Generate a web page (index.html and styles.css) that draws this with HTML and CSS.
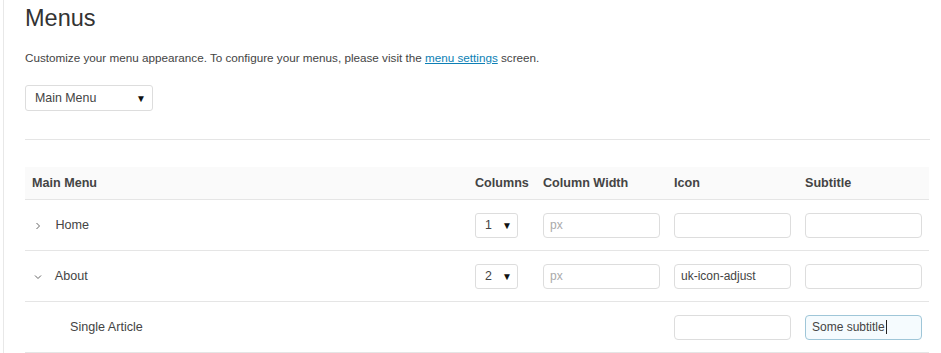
FILE: index.html
```html
<!DOCTYPE html>
<html lang="en">
<head>
    <meta charset="UTF-8">
    <title>Menus</title>
    <link rel="stylesheet" href="styles.css">
</head>
<body>
    <div class="page">
        <div class="sidebar"></div>
        <main class="content">
            <h1>Menus</h1>
            <p class="intro">Customize your menu appearance. To configure your menus, please visit the <a href="#">menu settings</a> screen.</p>

            <div class="select select-menu">
                <span>Main Menu</span>
                <span class="arrow">&#9660;</span>
            </div>

            <hr>

            <table class="menu-table">
                <thead>
                    <tr>
                        <th class="col-name">Main Menu</th>
                        <th class="col-columns">Columns</th>
                        <th class="col-width">Column Width</th>
                        <th class="col-icon">Icon</th>
                        <th class="col-subtitle">Subtitle</th>
                    </tr>
                </thead>
                <tbody>
                    <tr>
                        <td class="item">
                            <svg class="toggle" width="8" height="8" viewBox="0 0 8 8"><polyline points="2.5,1 5.5,4 2.5,7" fill="none" stroke="#666" stroke-width="1"/></svg>
                            Home
                        </td>
                        <td>
                            <div class="select select-small">
                                <span>1</span>
                                <span class="arrow">&#9660;</span>
                            </div>
                        </td>
                        <td><input type="text" class="field" placeholder="px"></td>
                        <td><input type="text" class="field"></td>
                        <td><input type="text" class="field"></td>
                    </tr>
                    <tr>
                        <td class="item">
                            <svg class="toggle" width="8" height="8" viewBox="0 0 8 8"><polyline points="1,2.5 4,5.5 7,2.5" fill="none" stroke="#666" stroke-width="1"/></svg>
                            About
                        </td>
                        <td>
                            <div class="select select-small">
                                <span>2</span>
                                <span class="arrow">&#9660;</span>
                            </div>
                        </td>
                        <td><input type="text" class="field" placeholder="px"></td>
                        <td><input type="text" class="field" value="uk-icon-adjust"></td>
                        <td><input type="text" class="field"></td>
                    </tr>
                    <tr>
                        <td class="item child">Single Article</td>
                        <td></td>
                        <td></td>
                        <td><input type="text" class="field"></td>
                        <td><div class="field is-focus">Some subtitle<span class="caret"></span></div></td>
                    </tr>
                </tbody>
            </table>
        </main>
    </div>
</body>
</html>
```

FILE: styles.css
```css
body {
    margin: 0;
    font-family: "Liberation Sans", Arial, sans-serif;
    color: #444;
    background: #fff;
}
.page {
    display: flex;
    min-height: 353px;
}
.sidebar {
    width: 3px;
    border-right: 1px solid #e8e8e8;
    flex-shrink: 0;
}
.content {
    flex: 1;
    padding: 0 11px 0 21px;
}
h1 {
    margin: 3px 0 0;
    font-size: 23.5px;
    font-weight: normal;
    line-height: 30px;
    color: #333;
}
.intro {
    margin: 17px 0 0;
    font-size: 11.7px;
    line-height: 16px;
    color: #444;
}
.intro a {
    color: #0d7fb5;
    text-decoration: underline;
}
.select {
    display: flex;
    justify-content: space-between;
    align-items: center;
    box-sizing: border-box;
    border: 1px solid #ddd;
    border-radius: 3px;
    background: #fff;
    color: #444;
    font-size: 12.4px;
}
.select .arrow {
    font-size: 10px;
    color: #111;
}
.select-menu {
    margin-top: 19px;
    width: 128px;
    height: 26px;
    padding: 0 6px 0 9px;
}
.select-small {
    width: 43px;
    height: 25px;
    padding: 0 5px 0 9px;
}
hr {
    margin: 28px 0 0;
    border: 0;
    border-top: 1px solid #e5e5e5;
}
.menu-table {
    margin-top: 27px;
    width: 904px;
    table-layout: fixed;
    border-collapse: collapse;
    font-size: 12.6px;
}
.menu-table th {
    background: #fafafa;
    height: 32px;
    padding: 0;
    text-align: left;
    font-weight: bold;
    color: #444;
    border-bottom: 1px solid #e5e5e5;
}
.menu-table td {
    height: 50px;
    padding: 0;
    border-bottom: 1px solid #e5e5e5;
    vertical-align: middle;
}
.menu-table th.col-name {
    width: 443px;
    padding-left: 7px;
}
.col-columns {
    width: 68px;
}
.col-width,
.col-icon {
    width: 131px;
}
.col-subtitle {
    width: 124px;
}
.item {
    color: #444;
}
.menu-table td.item {
    padding-left: 9px;
}
.toggle {
    margin-right: 10px;
    vertical-align: -1px;
}
.menu-table td.child {
    padding-left: 45px;
}
.field {
    box-sizing: border-box;
    width: 117px;
    height: 25px;
    padding: 0 6px;
    border: 1px solid #ddd;
    border-radius: 4px;
    background: #fff;
    font-family: "Liberation Sans", Arial, sans-serif;
    font-size: 12px;
    color: #444;
    display: block;
}
.field::placeholder {
    color: #aaa;
}
.field.is-focus {
    display: flex;
    align-items: center;
    border-color: #9fc6d8;
    background: #f5fbfe;
}
.caret {
    display: inline-block;
    width: 1px;
    height: 14px;
    margin-left: 1px;
    background: #222;
}
```
